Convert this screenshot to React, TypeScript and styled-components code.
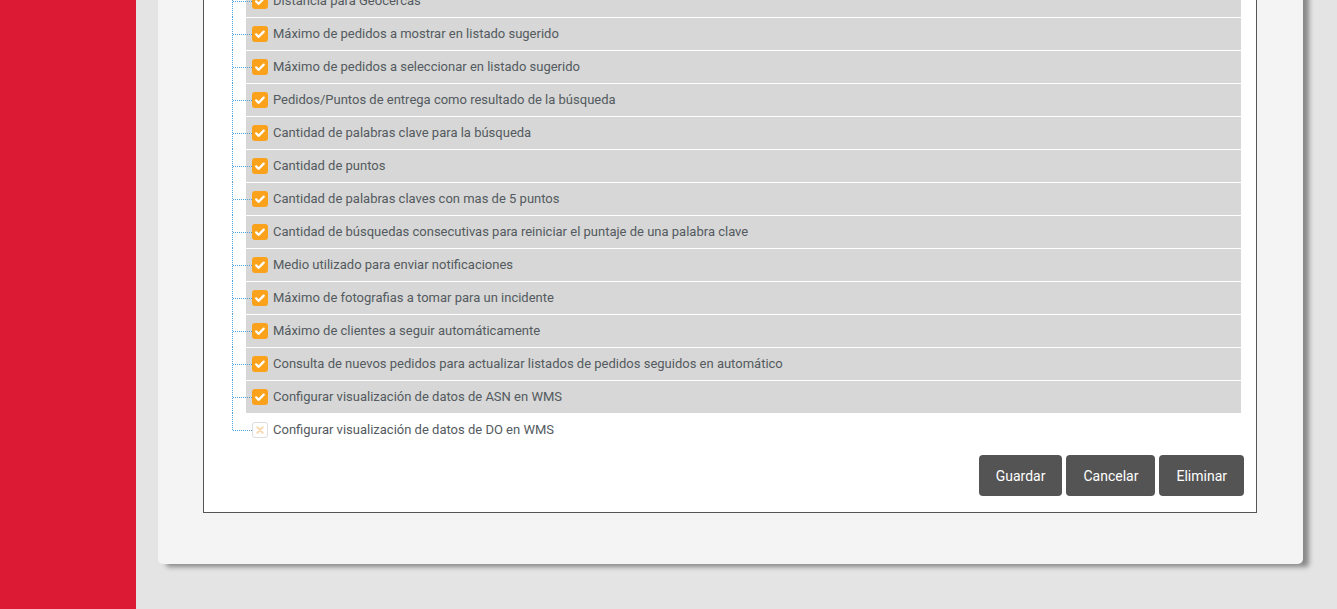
import React from "react";
import styled, { createGlobalStyle } from "styled-components";

const items: { label: string; checked: boolean }[] = [
  { label: "Distancia para Geocercas", checked: true },
  { label: "Máximo de pedidos a mostrar en listado sugerido", checked: true },
  { label: "Máximo de pedidos a seleccionar en listado sugerido", checked: true },
  { label: "Pedidos/Puntos de entrega como resultado de la búsqueda", checked: true },
  { label: "Cantidad de palabras clave para la búsqueda", checked: true },
  { label: "Cantidad de puntos", checked: true },
  { label: "Cantidad de palabras claves con mas de 5 puntos", checked: true },
  {
    label: "Cantidad de búsquedas consecutivas para reiniciar el puntaje de una palabra clave",
    checked: true,
  },
  { label: "Medio utilizado para enviar notificaciones", checked: true },
  { label: "Máximo de fotografias a tomar para un incidente", checked: true },
  { label: "Máximo de clientes a seguir automáticamente", checked: true },
  {
    label: "Consulta de nuevos pedidos para actualizar listados de pedidos seguidos en automático",
    checked: true,
  },
  { label: "Configurar visualización de datos de ASN en WMS", checked: true },
  { label: "Configurar visualización de datos de DO en WMS", checked: false },
];

const GlobalStyle = createGlobalStyle`
  html, body {
    margin: 0;
    padding: 0;
    overflow: hidden;
    background: #e4e4e4;
    font-family: Roboto, "Liberation Sans", sans-serif;
  }
`;

const Checkbox: React.FC<{ checked: boolean }> = ({ checked }) => (
  <Box $checked={checked}>
    {checked ? (
      <svg width="16" height="16" viewBox="0 0 16 16">
        <path
          d="M4.2 8.4l2.5 2.4 5-5.2"
          fill="none"
          stroke="#fff"
          strokeWidth="2.3"
          strokeLinecap="round"
          strokeLinejoin="round"
        />
      </svg>
    ) : (
      <svg width="14" height="14" viewBox="0 0 14 14">
        <path
          d="M4.3 4.3l5.4 5.4M9.7 4.3l-5.4 5.4"
          fill="none"
          stroke="#f8dab0"
          strokeWidth="2"
          strokeLinecap="round"
        />
      </svg>
    )}
  </Box>
);

const App: React.FC = () => {
  return (
    <>
      <GlobalStyle />
      <Page>
        <Sidebar />
        <Main>
          <Panel>
            <Frame>
              <Tree>
                {items.map((it, i) => (
                  <Node key={i} $last={i === items.length - 1}>
                    <Row $checked={it.checked}>
                      <Checkbox checked={it.checked} />
                      <Label>{it.label}</Label>
                    </Row>
                  </Node>
                ))}
              </Tree>
              <Actions>
                <Button>Guardar</Button>
                <Button>Cancelar</Button>
                <Button>Eliminar</Button>
              </Actions>
            </Frame>
          </Panel>
        </Main>
      </Page>
    </>
  );
};
export default App;

const Page = styled.div`
  display: flex;
  min-height: 100vh;
  height: 609px;
`;

const Sidebar = styled.aside`
  width: 136px;
  flex: none;
  background: #dc1a33;
`;

const Main = styled.main`
  flex: 1;
  padding: 0 34px 0 22px;
  margin-top: -16px;
`;

const Panel = styled.section`
  background: #f4f4f4;
  border-radius: 0 0 5px 5px;
  padding: 0 46px 51px 45px;
  box-shadow: 7px 4px 5px -1px rgba(0, 0, 0, 0.4);
`;

const Frame = styled.div`
  background: #fff;
  border: 1px solid #555;
  border-top: none;
  padding: 0 12px 16px 0;
`;

const Tree = styled.ul`
  list-style: none;
  margin: 0;
  padding: 0 3px 0 28px;
`;

const Node = styled.li<{ $last: boolean }>`
  position: relative;
  padding: 1px 0 0 14px;

  &::before {
    content: "";
    position: absolute;
    left: 0;
    top: 0;
    height: ${(p) => (p.$last ? "17px" : "100%")};
    border-left: 1px dotted #4fa3d9;
  }

  &::after {
    content: "";
    position: absolute;
    left: 1px;
    top: 17px;
    width: 19px;
    border-top: 1px dotted #4fa3d9;
  }
`;

const Row = styled.div<{ $checked: boolean }>`
  display: flex;
  align-items: center;
  gap: 5px;
  height: 32px;
  padding-left: 6px;
  background: ${(p) => (p.$checked ? "#d6d7d6" : "transparent")};
`;

const Box = styled.span<{ $checked: boolean }>`
  position: relative;
  z-index: 1;
  width: 16px;
  height: 16px;
  flex: none;
  box-sizing: border-box;
  border-radius: 3px;
  display: flex;
  align-items: center;
  justify-content: center;
  background: ${(p) => (p.$checked ? "#faa21b" : "#fff")};
  border: ${(p) => (p.$checked ? "none" : "1px solid #dedede")};
`;

const Label = styled.span`
  font-size: 13px;
  color: #545a60;
  white-space: nowrap;
  margin-bottom: 2px;
`;

const Actions = styled.div`
  display: flex;
  justify-content: flex-end;
  gap: 4px;
  margin-top: 9px;
`;

const Button = styled.button`
  height: 41px;
  padding: 0 17px;
  border: none;
  border-radius: 4px;
  background: #545454;
  color: #fff;
  font-family: Roboto, "Liberation Sans", sans-serif;
  font-size: 14px;
  cursor: pointer;
`;
